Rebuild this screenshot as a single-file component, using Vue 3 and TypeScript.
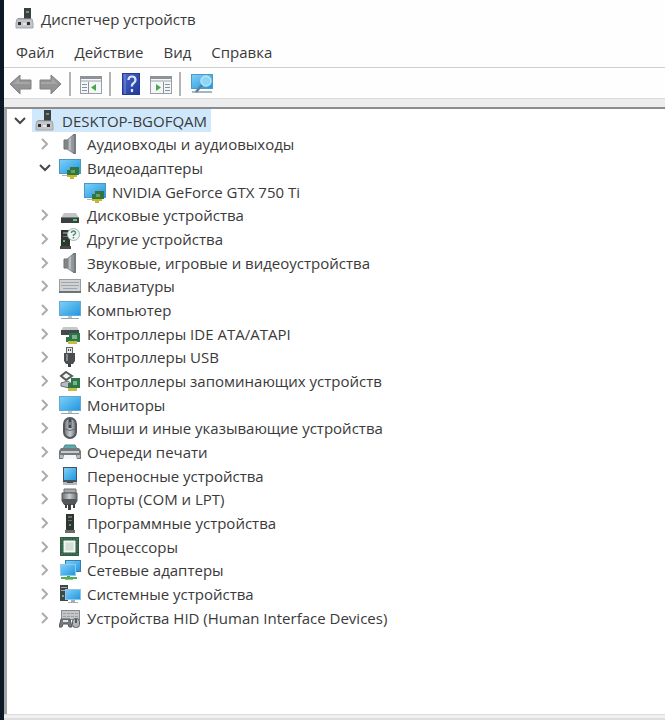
<script setup lang="ts">
import { computed, ref } from 'vue'

interface Device {
  id: string
  label: string
  icon: string
  children?: Device[]
}

interface Row {
  device: Device
  level: number
}

const category = (icon: string, label: string, children: Device[] = []): Device => ({
  id: label,
  label,
  icon,
  children,
})

const root: Device = category('computer-root', 'DESKTOP-BGOFQAM', [
  category('speaker', 'Аудиовходы и аудиовыходы'),
  category('display-card', 'Видеоадаптеры', [
    { id: 'gpu', label: 'NVIDIA GeForce GTX 750 Ti', icon: 'display-card' },
  ]),
  category('disk', 'Дисковые устройства'),
  category('unknown', 'Другие устройства'),
  category('speaker', 'Звуковые, игровые и видеоустройства'),
  category('keyboard', 'Клавиатуры'),
  category('monitor', 'Компьютер'),
  category('ide', 'Контроллеры IDE ATA/ATAPI'),
  category('usb', 'Контроллеры USB'),
  category('storage', 'Контроллеры запоминающих устройств'),
  category('monitor', 'Мониторы'),
  category('mouse', 'Мыши и иные указывающие устройства'),
  category('printer', 'Очереди печати'),
  category('portable', 'Переносные устройства'),
  category('port', 'Порты (COM и LPT)'),
  category('software', 'Программные устройства'),
  category('cpu', 'Процессоры'),
  category('network', 'Сетевые адаптеры'),
  category('system', 'Системные устройства'),
  category('hid', 'Устройства HID (Human Interface Devices)'),
])

const menus = ['Файл', 'Действие', 'Вид', 'Справка']

const toolGroups = [
  [
    { icon: 'back', label: 'Назад' },
    { icon: 'forward', label: 'Вперед' },
  ],
  [{ icon: 'console-tree', label: 'Дерево консоли' }],
  [
    { icon: 'help', label: 'Справка' },
    { icon: 'action-pane', label: 'Панель действий' },
  ],
  [{ icon: 'scan', label: 'Обновить конфигурацию' }],
]

const expanded = ref(new Set<string>([root.id, 'Видеоадаптеры']))
const selected = ref(root.id)

const rows = computed<Row[]>(() => {
  const list: Row[] = []
  const walk = (device: Device, level: number) => {
    list.push({ device, level })
    if (expanded.value.has(device.id)) {
      device.children?.forEach((child) => walk(child, level + 1))
    }
  }
  walk(root, 0)
  return list
})

function toggle(id: string) {
  const next = new Set(expanded.value)
  if (!next.delete(id)) next.add(id)
  expanded.value = next
}
</script>

<template>
  <svg class="sprite" aria-hidden="true">
    <defs>
      <linearGradient id="g-screen" x1="0" y1="0" x2="1" y2="1">
        <stop offset="0" stop-color="#7fd0f8" />
        <stop offset="1" stop-color="#2196e0" />
      </linearGradient>
      <linearGradient id="g-metal" x1="0" y1="0" x2="1" y2="0">
        <stop offset="0" stop-color="#6b7074" />
        <stop offset="0.5" stop-color="#c9cdd0" />
        <stop offset="1" stop-color="#666b70" />
      </linearGradient>
      <linearGradient id="g-help" x1="0" y1="0" x2="1" y2="1">
        <stop offset="0" stop-color="#4a68cc" />
        <stop offset="1" stop-color="#1f3799" />
      </linearGradient>
    </defs>

    <symbol id="computer-root" viewBox="0 0 22 22">
      <rect x="10" y="0" width="7" height="12" fill="#3c4043" />
      <rect x="12" y="3" width="3" height="2" fill="#74917c" />
      <path d="M4 10h6v2H4z" fill="#8f9396" />
      <path d="M3 11h15l1 4v5H2v-5z" fill="#c3c5c8" stroke="#a2a5a8" />
      <rect x="4" y="14" width="3" height="3" fill="#2b2d30" />
      <rect x="13" y="14" width="3" height="3" fill="#2b2d30" />
      <rect x="9" y="15" width="3" height="2" fill="#e6e7e9" />
    </symbol>

    <symbol id="speaker" viewBox="0 0 22 22">
      <path d="M5 7h3v9H5z" fill="#85898c" stroke="#6a6e71" />
      <path d="M8 7l6-5v18l-6-4z" fill="url(#g-metal)" stroke="#85898c" />
      <path d="M14 1h3v20h-3z" fill="#777c82" />
      <path d="M14 3v16" stroke="#a9adb2" />
    </symbol>

    <symbol id="monitor" viewBox="0 0 22 22">
      <rect x="0.5" y="2.500" width="21" height="14" fill="url(#g-screen)" stroke="#62a8d2" />
      <path d="M9 17h4v2H9z" fill="#b5cad6" />
      <path d="M2 19h18v1H2z" fill="#94a6b1" />
    </symbol>

    <symbol id="display-card" viewBox="0 0 22 22">
      <rect x="0.5" y="2.500" width="21" height="14" fill="url(#g-screen)" stroke="#4b98c6" />
      <path d="M3 18h6v1H3z" fill="#a9b7c0" />
      <path d="M11 10h9v8h-2v1H8v-6h3z" fill="#34753d" />
      <rect x="12" y="13" width="4" height="3" fill="#63a465" />
      <path d="M8 18h10v2h-3v2h-4v-2H8z" fill="#c4b532" />
    </symbol>

    <symbol id="disk" viewBox="0 0 22 22">
      <path d="M5 9h12l3 5H2z" fill="#c1c5c8" />
      <path d="M2 13h18v6H2z" fill="#3b3f42" />
      <path d="M2 13h18v1H2z" fill="#777c80" />
      <rect x="14" y="15" width="4" height="2" fill="#4ed15d" />
    </symbol>

    <symbol id="unknown" viewBox="0 0 22 22">
      <path d="M2 2h9v17H2z" fill="#303532" />
      <path d="M4 4h5v2H4zM4 8h4v1H4z" fill="#6d7b72" />
      <rect x="4" y="12" width="2" height="2" fill="#46c45c" />
      <path d="M1 18h11v3H1z" fill="#464b48" />
      <circle cx="14.500" cy="6.500" r="6" fill="#eef5f3" stroke="#9cb7b0" />
      <path d="M12.500 5q0-2 2-2t2 2q0 1-2 2v1M14.500 9v1.500" fill="none" stroke="#50897a" stroke-width="1.400" />
    </symbol>

    <symbol id="keyboard" viewBox="0 0 22 22">
      <rect x="0.5" y="4.500" width="21" height="13" fill="#d0d3d5" stroke="#9a9ea1" />
      <path d="M2 7.500h18M2 10.500h18M4 13.500h14" stroke="#a0a5a8" />
      <path d="M0 16h22v2H0z" fill="#6e7377" />
    </symbol>

    <symbol id="ide" viewBox="0 0 22 22">
      <path d="M4 4h14l2 4H2z" fill="#c5c9cb" />
      <path d="M2 7h18v5H2z" fill="#45494c" />
      <path d="M10 10h11v9H7v-5h3z" fill="#2b7548" />
      <rect x="13" y="12" width="5" height="4" fill="#78b58a" />
      <path d="M9 18h9v3H9z" fill="#cabb42" />
    </symbol>

    <symbol id="usb" viewBox="0 0 22 22">
      <rect x="7.500" y="1.500" width="6" height="6" fill="#e4e6e7" stroke="#616568" />
      <path d="M9 3h1v2H9zM11 3h1v2h-1z" fill="#45484a" />
      <path d="M5 7h11v8l-2 3H7l-2-3z" fill="#4a4d50" />
      <path d="M7 8h2v7H7z" fill="#83888b" />
      <path d="M9 18h3v3H9z" fill="#3e4143" />
    </symbol>

    <symbol id="storage" viewBox="0 0 22 22">
      <path d="M7 2l6 4-6 4-5-4z" fill="#f2f3f3" stroke="#55595c" stroke-width="2" />
      <path d="M2 13l7-2 5 4-4 3-8-2z" fill="#b9bdc0" stroke="#666b6e" />
      <path d="M12 8h9v10H9v-5h3z" fill="#2e7647" />
      <rect x="14" y="11" width="4" height="4" fill="#78b58a" />
      <path d="M9 18h9v3H9z" fill="#cabb42" />
    </symbol>

    <symbol id="mouse" viewBox="0 0 22 22">
      <rect x="5" y="1" width="12" height="20" rx="6" fill="url(#g-metal)" stroke="#53585d" stroke-width="2" />
      <path d="M11 2v9" stroke="#40454b" stroke-width="3" />
      <path d="M11 5v3" stroke="#a9c0d5" />
      <path d="M6 12q5 3 10 0" fill="none" stroke="#666b70" />
    </symbol>

    <symbol id="printer" viewBox="0 0 22 22">
      <path d="M6 4h10l2 4H4z" fill="#5aaba9" stroke="#568481" />
      <path d="M2 7h18l2 3v8h-5v-4H5v4H0v-8z" fill="#74797d" />
      <path d="M2 10h18v2H2z" fill="#c6cbcd" />
      <path d="M5 14h12l1 4H4z" fill="#f5f6f6" />
      <path d="M1 14h3v3H1zM18 14h3v3h-3z" fill="#b5babc" />
    </symbol>

    <symbol id="portable" viewBox="0 0 22 22">
      <rect x="4" y="2" width="14" height="18" fill="#46525d" />
      <rect x="5" y="3" width="12" height="12" fill="url(#g-screen)" />
      <path d="M4 17h14v3H4z" fill="#b4b9bc" />
      <path d="M8 17h6v1H8z" fill="#43484c" />
    </symbol>

    <symbol id="port" viewBox="0 0 22 22">
      <path d="M5 1h12v4H5z" fill="#a5a9ab" stroke="#6d7174" />
      <path d="M3 5h15v8l-2 3H5l-2-3z" fill="url(#g-metal)" stroke="#55595c" />
      <path d="M3 11h15l-2 6H5z" fill="#53575a" />
      <path d="M6 16h2v4H6zM9 16h3v6H9zM14 16h2v4h-2z" fill="#404446" />
    </symbol>

    <symbol id="software" viewBox="0 0 22 22">
      <path d="M7 2h8v17H7z" fill="#303532" />
      <path d="M9 4h4v2H9zM9 8h4v1H9z" fill="#68706c" />
      <rect x="10" y="12" width="2" height="2" fill="#59a768" />
      <path d="M6 18h10v3H6z" fill="#696e6b" />
    </symbol>

    <symbol id="cpu" viewBox="0 0 22 22">
      <rect x="1" y="1" width="19" height="19" fill="#2f5e43" />
      <path d="M2 3h17M2 18h17M3 2v17M18 2v17" stroke="#4f7b5f" stroke-dasharray="2 1" />
      <rect x="5.500" y="5.500" width="10" height="10" fill="#d3ded6" stroke="#f2f6f3" stroke-width="2" />
    </symbol>

    <symbol id="network" viewBox="0 0 22 22">
      <rect x="6.500" y="1.500" width="15" height="11" fill="url(#g-screen)" stroke="#327faf" />
      <rect x="1.500" y="5.500" width="15" height="11" fill="url(#g-screen)" stroke="#8fcbea" />
      <path d="M8 17h3v2H8z" fill="#52976b" />
      <path d="M2 18h16v2H2z" fill="#50ae55" />
      <path d="M6 20h8v1H6z" fill="#8bc58d" />
    </symbol>

    <symbol id="system" viewBox="0 0 22 22">
      <path d="M1 2h8v16H1z" fill="#414649" />
      <path d="M2 4h6v1H2zM2 7h6v1H2z" fill="#a3aaad" />
      <rect x="3" y="12" width="2" height="2" fill="#55c267" />
      <rect x="6.500" y="6.500" width="15" height="10" fill="url(#g-screen)" stroke="#8dc6e4" />
      <path d="M12 17h4v2h3v1H9v-1h3z" fill="#9fb0ba" />
    </symbol>

    <symbol id="hid" viewBox="0 0 22 22">
      <rect x="2.500" y="3.500" width="18" height="9" fill="#c2c6c9" stroke="#85898c" />
      <path d="M4 6.500h15M4 9.500h15" stroke="#999ea2" stroke-dasharray="3 1" />
      <path d="M0 20l2-8h9l2 8h-3l-1-3H4l-1 3z" fill="#777c81" stroke="#55595e" />
      <path d="M4 14h5" stroke="#e3e6e8" stroke-width="2" />
      <rect x="13.500" y="11.500" width="7" height="9" rx="3" fill="#b2b6ba" stroke="#555a60" />
      <path d="M17 12v4" stroke="#555a60" stroke-width="2" />
    </symbol>

    <symbol id="back" viewBox="0 0 24 24">
      <path d="M1 12L11 3v5h11v9H11v5z" fill="#949494" stroke="#828282" />
      <path d="M4 12l6-6v4h11v2z" fill="#a6a6a6" />
    </symbol>
    <symbol id="forward" viewBox="0 0 24 24">
      <path d="M22 12L12 3v5H1v9h11v5z" fill="#949494" stroke="#828282" />
      <path d="M19 12l-6-6v4H2v2z" fill="#a6a6a6" />
    </symbol>
    <symbol id="console-tree" viewBox="0 0 24 24">
      <rect x="1.500" y="4.500" width="21" height="17" fill="#f5f6f7" stroke="#9a9da1" />
      <path d="M1 4h22v3H1z" fill="#8e9399" />
      <path d="M2 8h20v2H2z" fill="#c8ccd0" />
      <path d="M9.500 10v11" stroke="#8c9197" />
      <path d="M3 12.500h5M3 15.500h5M3 18.500h5" stroke="#8292a5" />
      <path d="M17 12v7l-5-3.500z" fill="#47a84b" />
    </symbol>
    <symbol id="action-pane" viewBox="0 0 24 24">
      <rect x="1.500" y="4.500" width="21" height="17" fill="#f5f6f7" stroke="#9a9da1" />
      <path d="M1 4h22v3H1z" fill="#8e9399" />
      <path d="M2 8h20v2H2z" fill="#c8ccd0" />
      <path d="M14.500 10v11" stroke="#8c9197" />
      <path d="M16 12.500h5M16 15.500h5M16 18.500h5" stroke="#8292a5" />
      <path d="M7 12v7l5-3.500z" fill="#47a84b" />
    </symbol>
    <symbol id="help" viewBox="0 0 24 24">
      <rect x="3.500" y="1.500" width="17" height="21" fill="url(#g-help)" stroke="#263d8f" />
      <path d="M6 2v20" stroke="#7890dc" />
      <path d="M9.500 8q0-3.500 3.500-3.500T16.500 8q0 2-2 3.200T13 14.500M13 17v3" fill="none" stroke="#dfe6fa" stroke-width="2.200" />
    </symbol>
    <symbol id="scan" viewBox="0 0 24 24">
      <rect x="2.500" y="2.500" width="21" height="14" fill="url(#g-screen)" stroke="#4c9bc4" />
      <path d="M3 19h20v2H3z" fill="#a6b5bf" />
      <circle cx="17" cy="9" r="5" fill="#8dd6f5" stroke="#b9e4f5" stroke-width="1.500" />
      <path d="M13 13l-6 7" stroke="#5b8297" stroke-width="2.500" />
    </symbol>
  </svg>

  <main class="window">
    <header class="titlebar">
      <svg class="icon" aria-hidden="true"><use href="#computer-root" /></svg>
      <h1>Диспетчер устройств</h1>
    </header>

    <nav class="menubar">
      <button v-for="menu in menus" :key="menu" type="button">{{ menu }}</button>
    </nav>

    <div class="toolbar" role="toolbar">
      <div v-for="(group, index) in toolGroups" :key="index" class="tool-group">
        <button v-for="tool in group" :key="tool.icon" type="button" :aria-label="tool.label">
          <svg aria-hidden="true"><use :href="`#${tool.icon}`" /></svg>
        </button>
      </div>
    </div>

    <section class="panel">
      <ul class="tree" role="tree">
        <li
          v-for="row in rows"
          :key="row.device.id"
          role="treeitem"
          :aria-level="row.level + 1"
          :aria-selected="selected === row.device.id"
          :class="['row', `level-${row.level}`]"
        >
          <button
            v-if="row.device.children"
            type="button"
            class="chevron"
            :class="{ open: expanded.has(row.device.id) }"
            :aria-label="row.device.label"
            :aria-expanded="expanded.has(row.device.id)"
            @click="toggle(row.device.id)"
          >
            <svg viewBox="0 0 16 16" aria-hidden="true"><path d="M5 3l5 5-5 5" /></svg>
          </button>
          <span v-else class="chevron"></span>
          <button
            type="button"
            class="item"
            :class="{ selected: selected === row.device.id }"
            @click="selected = row.device.id"
          >
            <svg class="icon" aria-hidden="true"><use :href="`#${row.device.icon}`" /></svg>
            <span>{{ row.device.label }}</span>
          </button>
        </li>
      </ul>
    </section>
    <footer class="statusbar"></footer>
  </main>
</template>

<style>
body {
  margin: 0;
  background: #fff;
}
</style>

<style scoped>
.sprite {
  position: absolute;
  width: 0;
  height: 0;
}

.window {
  box-sizing: border-box;
  display: flex;
  flex-direction: column;
  min-height: 100vh;
  border-left: 4px solid #0b1826;
  background: #fefefe;
  color: #3a3a3a;
  font-family: 'Open Sans', 'Noto Sans', sans-serif;
  font-size: 15px;
  line-height: 20px;
}

button {
  padding: 0;
  border: 0;
  background: none;
  color: inherit;
  font: inherit;
}

.icon {
  flex: none;
  width: 22px;
  height: 22px;
}

.titlebar {
  display: flex;
  align-items: center;
  gap: 5px;
  height: 37px;
  padding-left: 10px;
}

.titlebar h1 {
  margin: 0;
  font-size: 15px;
  font-weight: 400;
}

.menubar {
  display: flex;
  align-items: center;
  gap: 20px;
  height: 30px;
  padding-left: 12px;
  border-bottom: 1px solid #cfcfcf;
}

.toolbar {
  display: flex;
  align-items: center;
  height: 28px;
  padding: 2px 2px 0;
  border-bottom: 1px solid #d9d9d9;
}

.tool-group {
  display: flex;
  align-items: center;
}

.tool-group + .tool-group {
  margin-left: 3px;
  padding-left: 5px;
  border-left: 2px solid #b4b4b4;
}

.tool-group button {
  display: grid;
  place-items: center;
  width: 30px;
  height: 24px;
}

.tool-group svg {
  width: 24px;
  height: 24px;
}

.panel {
  flex: 1;
  margin-top: 8px;
  border-top: 2px solid #8c8c8c;
  border-left: 3px solid #a2a4a7;
  background: #fff;
  box-shadow: 0 -8px 0 #ededed;
}

.tree {
  margin: 0;
  padding: 0 0 16px 5px;
  list-style: none;
}

.row {
  display: flex;
  align-items: center;
  height: 24px;
}

.row:nth-child(3n + 1) {
  height: 23px;
}

.level-1 {
  padding-left: 25px;
}

.level-2 {
  padding-left: 50px;
}

.chevron {
  flex: none;
  width: 16px;
  height: 16px;
  margin-right: 4px;
}

.chevron svg {
  display: block;
  width: 16px;
  height: 16px;
  fill: none;
  stroke: #ababab;
  stroke-width: 2;
}

.chevron.open svg {
  stroke: #484848;
  transform: rotate(90deg);
}

.item {
  display: flex;
  align-items: center;
  gap: 6px;
  height: 23px;
  padding: 0 4px 0 2px;
  white-space: nowrap;
}

.item.selected {
  background: #cfe8fb;
}

.statusbar {
  height: 3px;
  border-top: 1px solid #dcdcdc;
  border-bottom: 2px solid #dedede;
  background: #f0f0f0;
}
</style>
